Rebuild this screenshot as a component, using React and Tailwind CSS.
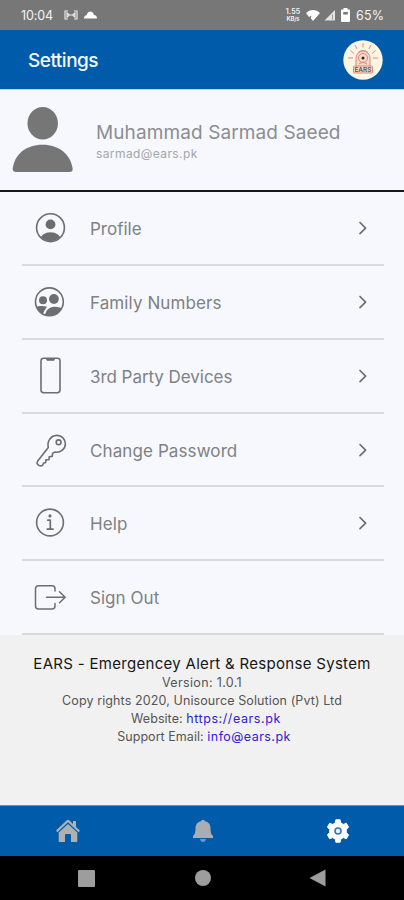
import React from "react";

const stroke = { fill: "none", stroke: "currentColor", strokeWidth: 1.6, strokeLinecap: "round", strokeLinejoin: "round" };

const ProfileIcon = () => (
  <>
    <clipPath id="profile-disc"><circle cx="18.5" cy="35.7" r="13.4" /></clipPath>
    <circle cx="18.5" cy="35.7" r="13.9" {...stroke} />
    <circle cx="18.5" cy="32.4" r="4.9" fill="currentColor" />
    <ellipse cx="18.5" cy="48" rx="10.5" ry="7.7" fill="currentColor" clipPath="url(#profile-disc)" />
  </>
);

const FamilyIcon = () => (
  <>
    <clipPath id="family-disc"><circle cx="17.4" cy="35.8" r="13.8" /></clipPath>
    <circle cx="17.4" cy="35.8" r="13.9" {...stroke} />
    <circle cx="11" cy="34.2" r="4" fill="currentColor" />
    <circle cx="21.9" cy="33" r="4.9" fill="currentColor" />
    <g clipPath="url(#family-disc)" fill="currentColor">
      <path d="M2 42c4-2.500 9-2.500 13-1.300C13 43.500 12 45 11 48l-1 3H2z" />
      <path d="M12.500 52c.5-7 4-11.300 10-11.300 4 0 7 1 10 3V52z" />
    </g>
  </>
);

const PhoneIcon = () => (
  <>
    <rect x="9" y="18.200" width="19" height="34.500" rx="2.600" {...stroke} />
    <path d="M14 18.500h9l-1 2h-7z" fill="currentColor" stroke="currentColor" strokeWidth=".6" />
  </>
);

const KeyIcon = () => (
  <>
    <path d="M16.300 33.500C14.800 27.500 18.500 21.800 24.700 21.400c5-.1 8.800 3.800 8.700 8.600-.2 5.200-5 9.100-10.500 8l-2.300 1.400-.4 3-3 .3-.2 2.900-3 .1-.4 2.700-2.100.8-.8 1.900c-1.500 1.300-4 .8-5-.6-.6-.9-.7-2.600 0-3.500z" {...stroke} />
    <circle cx="26.600" cy="28.300" r="2.400" {...stroke} />
  </>
);

const InfoIcon = () => (
  <>
    <circle cx="18" cy="35.500" r="13.400" {...stroke} />
    <circle cx="18" cy="28.900" r="1.600" fill="currentColor" />
    <path d="M15.800 33.200h2.500v8.800M15.300 42.200h5.700" {...stroke} strokeWidth="1.700" />
  </>
);

const ExitIcon = () => (
  <path d="M23 30v-2.200a3 3 0 0 0-3-3H6.500a3 3 0 0 0-3 3V45a3 3 0 0 0 3 3H20a3 3 0 0 0 3-3v-2.500M14.500 36.200h18.500M27.500 30.700l5.700 5.500-5.700 5.500" {...stroke} strokeWidth="1.500" />
);

const rows = [
  { label: "Profile", Icon: ProfileIcon, size: "h-[74px] tracking-[0]", arrow: true },
  { label: "Family Numbers", Icon: FamilyIcon, size: "h-[74px] tracking-[0.1px]", arrow: true },
  { label: "3rd Party Devices", Icon: PhoneIcon, size: "h-[74px] tracking-[-0.05px]", arrow: true },
  { label: "Change Password", Icon: KeyIcon, size: "h-[73px] tracking-[0.1px]", arrow: true },
  { label: "Help", Icon: InfoIcon, size: "h-[74px] tracking-[0.1px]", arrow: true },
  { label: "Sign Out", Icon: ExitIcon, size: "h-[74px] tracking-[0.05px]", arrow: false },
];

function StatusBar() {
  return (
    <div className="flex h-[30px] items-center bg-[#777777] pl-[21px] text-[12.5px] text-[#f4f4f4]">
      <span className="w-[43px] pt-[2px] tracking-[-0.1px]">10:04</span>
      <svg className="h-[10px] w-[14px]" viewBox="0 0 14 10" fill="none" stroke="#eee" strokeWidth="1.1">
        <path d="M4 1H1v8h3M10 1h3v8h-3M3 3l2.500 2L3 7zM11 3 8.500 5 11 7zM5.500 5h3" />
      </svg>
      <svg className="ml-[6px] h-[8px] w-[13px]" viewBox="0 0 13 8" fill="#fff">
        <path d="M0 7.500C0 5.500 1 4.500 2.500 4.300 3.200 2 4.500.5 6.300.5c2 0 3.300 1.500 3.600 3.500C12 4 13 5.500 13 7.500z" />
      </svg>
      <div className="ml-[188px] flex w-[16px] flex-col items-center pt-[1px] text-[7px] font-semibold leading-[6.5px]">
        <span className="tracking-[0.2px]">1.55</span>
        <span className="text-[6px] tracking-[-0.2px]">KB/s</span>
      </div>
      <svg className="ml-[5px] h-[12px] w-[14px]" viewBox="0 0 14 12" fill="#fff">
        <path d="M0 4C4 0 10 0 14 4L7 12 4.800 9.300 5.500 6.500 3 8z" />
      </svg>
      <svg className="ml-[4px] h-[12px] w-[12px]" viewBox="0 0 12 12">
        <path d="M.5 11.500 11 1v10.500z" fill="#e4e4e4" /><path d="M8.500 5.500v5" stroke="#888" strokeWidth=".8" />
      </svg>
      <svg className="ml-[5px] h-[14px] w-[9px]" viewBox="0 0 9 14">
        <path d="M2.500 0h4v1.500H8q1 0 1 1v10.500q0 1-1 1H1q-1 0-1-1V2.500q0-1 1-1h1.500z" fill="#fff" />
        <path d="M2.200 4h4.600v2.500H2.200z" fill="#777" />
      </svg>
      <span className="ml-[6px] pt-[2px] text-[12.5px] tracking-[0.2px]">65%</span>
    </div>
  );
}

function Logo() {
  return (
    <svg className="h-[40px] w-[40px]" viewBox="0 0 40 40">
      <circle cx="20" cy="20" r="19.700" fill="#fbf5e4" />
      <g fill="none" stroke="#dc8a7c" strokeWidth="1">
        <path d="M20 3v4.500M12 5l2 4M28 5l-2 4M7.500 10.500l3.500 3M32.500 10.500 29 13.500M5 18h5M30 18h5" />
        <path d="M13 26V18a7 7 0 0 1 14 0v8" fill="#f8d8cc" />
        <circle cx="20" cy="18" r="4.500" /><path d="M15 12.500q5-4 10 0M16 24l4-2 4 2" />
        <rect x="10.500" y="26" width="19" height="7" rx="1" fill="#f4d9cc" />
      </g>
      <circle cx="20" cy="18" r="1.500" fill="#382323" />
      <text x="20" y="32" textAnchor="middle" fontSize="6.500" fontWeight="600" fill="#5d5852" fontFamily="Inter, sans-serif">EARS</text>
    </svg>
  );
}

export default function App() {
  return (
    <div className="flex h-[900px] w-[404px] flex-col overflow-hidden bg-[#f1f1f1] font-['Inter',sans-serif]">
      <StatusBar />
      <header className="flex h-[60px] items-center justify-between border-b border-[#bed3ef] bg-[#005baa] pl-[28px] pr-[21px]">
        <h1 className="pt-[3px] text-[19px] font-medium tracking-[-0.5px] text-[#f3f7ff]">Settings</h1>
        <Logo />
      </header>
      <section className="flex h-[102px] border-b-2 border-[#15161f] bg-[#f6f8fe] pl-[12px]">
        <svg className="mt-[16px] h-[68px] w-[62px] shrink-0" viewBox="0 0 62 68" fill="#767676">
          <ellipse cx="30.700" cy="17.300" rx="15.200" ry="16.300" />
          <path d="M4 66q-3.500 0-3.300-3.500C2.500 48.500 14 38.800 30.500 38.800S58.500 48.500 60.600 62.500Q61 66 57.500 66z" />
        </svg>
        <div className="ml-[22px] mt-[31px] flex flex-col">
          <span className="text-[19px] leading-[24px] tracking-[0.1px] text-[#8b8d90]">Muhammad Sarmad Saeed</span>
          <span className="text-[12px] leading-[17px] tracking-[0.4px] text-[#a4a6aa]">sarmad@ears.pk</span>
        </div>
      </section>
      <ul className="bg-[#f6f8fe] pl-[22px] pr-[20px] text-[#6d6e70]">
        {rows.map(({ label, Icon, size, arrow }) => (
          <li key={label} className={`flex items-center border-b-2 border-[#d8dadd] pl-[10px] ${size}`}>
            <svg className="h-[72px] w-[36px] shrink-0 self-start" viewBox="0 0 36 72"><Icon /></svg>
            <span className="ml-[22px] flex-1 pt-[4px] text-[17px] text-[#7f8184]">{label}</span>
            {arrow && (
              <svg className="mr-[16px] h-[14px] w-[10px]" viewBox="0 0 10 14"><path d="m2 1.500 5.600 5.600L2 12.700" {...stroke} strokeWidth="1.700" /></svg>
            )}
          </li>
        ))}
      </ul>
      <footer className="flex flex-1 flex-col items-center pt-[19px] text-[12.5px] leading-[18px] text-[#555]">
        <p className="text-[15px] leading-[20px] tracking-[0.3px] text-[#161616]">EARS - Emergencey Alert &amp; Response System</p>
        <p className="tracking-[0.35px]">Version: 1.0.1</p>
        <p className="tracking-[0.11px]">Copy rights 2020, Unisource Solution (Pvt) Ltd</p>
        <p className="pl-[8px] tracking-[0.05px]">Website: <span className="tracking-[0.58px] text-[#2d20d8]">https://ears.pk</span></p>
        <p className="pl-[4px] tracking-[0.05px]">Support Email: <span className="tracking-[0.45px] text-[#2d20d8]">info@ears.pk</span></p>
      </footer>
      <nav className="flex h-[51px] items-center border-t border-[#5b91c5] bg-[#005baa]">
        <svg className="ml-[56px] h-[24px] w-[24px]" viewBox="0 0 24 24" fill="#aeb0b1">
          <path d="M0 11.500 10.800 1.200q1.200-1 2.400 0L17 5V2h3v6l4 3.700-1.400 1.600L12 3.300 1.400 13.200z" />
          <path d="M2.700 13.500 12 5l9.300 8.500V22q0 1-1 1H15v-7q0-1-1-1h-4q-1 0-1 1v7H3.700q-1 0-1-1z" />
        </svg>
        <svg className="ml-[111px] h-[24px] w-[24px]" viewBox="0 0 24 24" fill="#aaaeb1">
          <path d="M10.500 2V1h3v1c4 .8 6 3.500 6 7.500 0 4.500 1 6 2.500 7.500v2H2v-2c1.500-1.500 2.500-3 2.500-7.500 0-4 2-6.700 6-7.500z" />
          <path d="M9 20h6q-.5 3-3 3t-3-3z" fill="#659bca" />
        </svg>
        <svg className="ml-[111px] h-[24px] w-[24px]" viewBox="0 0 24 24">
          <path d="m9.800.8 4.400 0 .6 3.200 2.500 1.400 3.100-1.100 2.200 3.900-2.300 2.200v3.200l2.300 2.200-2.200 3.900-3.100-1.100-2.500 1.400-.6 3.200H9.800L9.200 20l-2.500-1.400-3.100 1.100-2.200-3.900 2.300-2.200v-3.200L1.400 8.200l2.200-3.900 3.100 1.100L9.200 4z" fill="#fff" stroke="#fff" strokeLinejoin="round" />
          <circle cx="12" cy="12" r="3" fill="#e7f0fa" stroke="#2a74b8" strokeWidth="1.500" />
        </svg>
      </nav>
      <div className="flex h-[44px] items-center bg-black pl-[78px]">
        <div className="h-[17px] w-[17px] rounded-[1px] bg-[#9d9d9d]" />
        <div className="ml-[100px] h-[16px] w-[16px] rounded-full bg-[#9d9d9d]" />
        <svg className="ml-[98px] h-[18px] w-[17px]" viewBox="0 0 17 18"><path d="M.5 9 16.500.5v17z" fill="#9d9d9d" /></svg>
      </div>
    </div>
  );
}
